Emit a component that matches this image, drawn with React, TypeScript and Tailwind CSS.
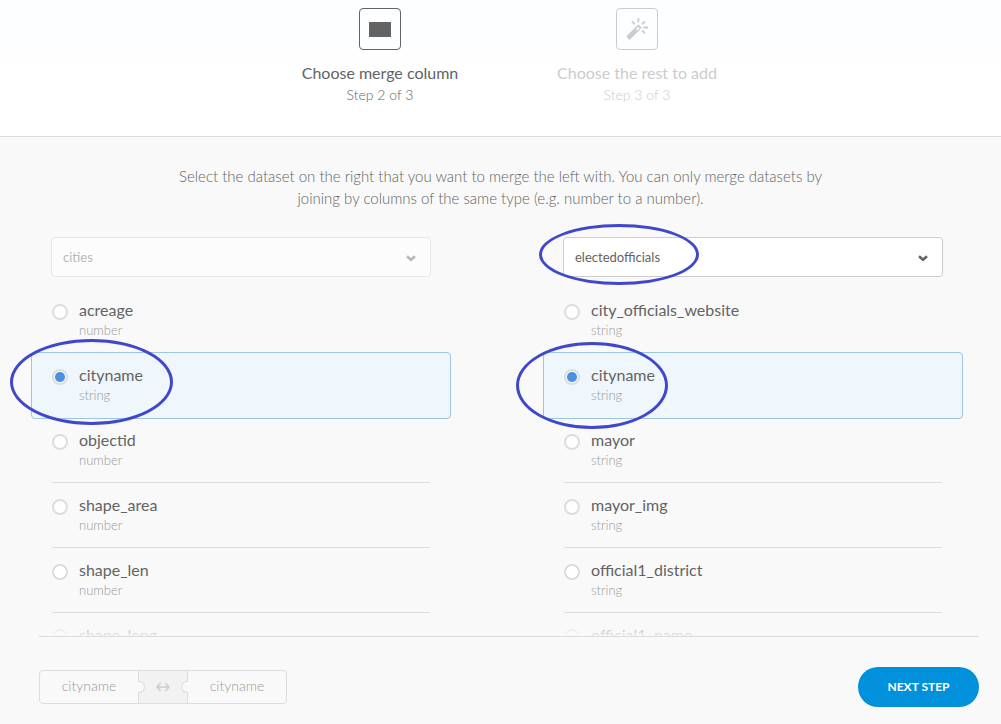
import { useState } from "react";
import type { ReactNode } from "react";

type Column = { name: string; type: string };

const leftColumns: Column[] = [
  { name: "acreage", type: "number" },
  { name: "cityname", type: "string" },
  { name: "objectid", type: "number" },
  { name: "shape_area", type: "number" },
  { name: "shape_len", type: "number" },
  { name: "shape_leng", type: "number" },
];

const rightColumns: Column[] = [
  { name: "city_officials_website", type: "string" },
  { name: "cityname", type: "string" },
  { name: "mayor", type: "string" },
  { name: "mayor_img", type: "string" },
  { name: "official1_district", type: "string" },
  { name: "official1_name", type: "string" },
];

function WandIcon() {
  return (
    <svg viewBox="0 0 22 22" className="size-[22px]" fill="none" stroke="currentColor" aria-hidden="true">
      <path d="M12.4 0v4.6M5.9 3.3l3 3M19 3.3l-3 3M17.3 9.5H22M16 12.4l3 3" strokeWidth="1.8" />
      <path
        d="M0.3 18.6L11.6 7.1a1.2 1.2 0 0 1 1.7 0l1.7 1.7a1.2 1.2 0 0 1 0 1.7L3.6 21.9zM9.9 11l1.5 1.5 2.2-2.3-1.4-1.5z"
        fill="currentColor"
        fillRule="evenodd"
        stroke="none"
      />
    </svg>
  );
}

function Chevron() {
  return (
    <svg
      viewBox="0 0 10 7"
      className="pointer-events-none absolute right-[15px] top-[18px] h-[7px] w-[10px]"
      fill="none"
      stroke="currentColor"
      strokeWidth="2.5"
      aria-hidden="true"
    >
      <path d="M1 1.2l4 3.6 4-3.6" />
    </svg>
  );
}

function Step({ title, note, active, children }: { title: string; note: string; active?: boolean; children: ReactNode }) {
  return (
    <li className={active ? "flex w-[257px] flex-col items-center text-[#636363]" : "flex w-[257px] flex-col items-center text-[#cccccc]"}>
      <span className="flex size-[42px] items-center justify-center rounded-[4px] border border-current">{children}</span>
      <span className="mt-3 text-base leading-[22px]">{title}</span>
      <span className="text-sm font-light leading-[22px]">{note}</span>
    </li>
  );
}

function DatasetSelect({ label, value, disabled, marked }: { label: string; value: string; disabled?: boolean; marked?: boolean }) {
  return (
    <div className={disabled ? "relative text-[#b8b8b8]" : "relative text-[#636363]"}>
      <select
        aria-label={label}
        disabled={disabled}
        className="block h-10 w-full appearance-none rounded-[4px] border border-[#cccccc] bg-white px-[11px] pt-[2px] text-[13px] disabled:border-[#e6e6e6] disabled:bg-[#fcfcfc] disabled:opacity-100"
      >
        <option>{value}</option>
      </select>
      <Chevron />
      {marked && (
        <span className="pointer-events-none absolute -left-6 -top-[13px] h-[61px] w-[160px] rounded-[50%] border-3 border-[#3f48cc]" />
      )}
    </div>
  );
}

function ColumnList({
  group,
  columns,
  selected,
  onSelect,
  markClass,
}: {
  group: string;
  columns: Column[];
  selected: string;
  onSelect: (name: string) => void;
  markClass: string;
}) {
  return (
    <ul className="px-px">
      {columns.map((c) => {
        const on = c.name === selected;
        return (
          <li
            key={c.name}
            className={
              on
                ? "relative z-10 -mx-[21px] -my-px h-[67px] rounded-[4px] border border-[#9cc5e3] bg-[#eff6fc] px-5 pt-[11px]"
                : "h-[65px] border-b border-[#dddddd] pt-[11px]"
            }
          >
            <label className="flex gap-[11px]">
              <input
                type="radio"
                name={group}
                checked={on}
                onChange={() => onSelect(c.name)}
                className="mt-[5px] size-4 shrink-0 appearance-none rounded-full border-2 border-[#dddddd] bg-white checked:bg-[radial-gradient(circle,#4a90e2_4.5px,#ffffff_5.5px)]"
              />
              <span className="flex flex-col text-[#636363]">
                <span className="text-base leading-[22px]">{c.name}</span>
                <span className="text-[13px] font-light leading-[18px] text-[#999999]">{c.type}</span>
              </span>
            </label>
            {on && <span className={markClass} />}
          </li>
        );
      })}
    </ul>
  );
}

export default function App() {
  const [left, setLeft] = useState("cityname");
  const [right, setRight] = useState("cityname");

  return (
    <div className="min-h-screen bg-[#f9f9f9] font-['Lato',sans-serif]">
      <header className="border-b border-[#dddddd] bg-white bg-linear-to-b from-[#fcfeff] to-white to-60% pb-[30px] pt-2">
        <ol className="flex justify-center pl-4">
          <Step title="Choose merge column" note="Step 2 of 3" active>
            <span className="h-[15px] w-[22px] bg-current" />
          </Step>
          <Step title="Choose the rest to add" note="Step 3 of 3">
            <WandIcon />
          </Step>
        </ol>
      </header>

      <main className="pt-7">
        <p className="mx-auto max-w-[660px] text-center text-[15px] font-light leading-[22px] text-[#636363]">
          Select the dataset on the right that you want to merge the left with. You can only merge datasets by joining by columns of
          the same type (e.g. number to a number).
        </p>

        <div className="mt-7 grid grid-cols-2 gap-x-33 pl-[51px] pr-[58px]">
          <DatasetSelect label="Left dataset" value="cities" disabled />
          <DatasetSelect label="Right dataset" value="electedofficials" marked />
        </div>

        <div className="relative h-[359px] overflow-hidden pt-[11px]">
          <div className="grid grid-cols-2 gap-x-33 pl-[51px] pr-[58px]">
            <ColumnList
              group="left-column"
              columns={leftColumns}
              selected={left}
              onSelect={setLeft}
              markClass="pointer-events-none absolute -left-[22px] -top-[14px] h-[86px] w-[163px] rounded-[50%] border-3 border-[#3f48cc]"
            />
            <ColumnList
              group="right-column"
              columns={rightColumns}
              selected={right}
              onSelect={setRight}
              markClass="pointer-events-none absolute -left-7 -top-[11px] h-[87px] w-[152px] rounded-[50%] border-3 border-[#3f48cc]"
            />
          </div>
          <div className="pointer-events-none absolute inset-x-0 bottom-0 h-5 bg-linear-to-b from-[#f9f9f9]/20 to-[#f9f9f9]/90" />
        </div>
      </main>

      <footer className="ml-[39px] mr-[22px] flex items-center justify-between border-t border-[#dddddd] pb-[17px] pt-[30px]">
        <div className="flex h-[34px] items-stretch rounded-[4px] border border-[#dddddd] text-sm font-light leading-[30px] text-[#999999]">
          <span className="w-[98px] text-center">{left}</span>
          <span className="relative flex w-[50px] items-center justify-center border-x border-[#dddddd] bg-[#f2f2f2] text-[#cccccc]">
            <span className="absolute -left-px top-[10px] h-3 w-[7px] rounded-r-full border border-l-0 border-[#dddddd] bg-[#f9f9f9]" />
            <svg viewBox="0 0 14 10" className="h-[10px] w-[14px]" fill="none" stroke="currentColor" strokeWidth="1.4" aria-hidden="true">
              <path d="M1 5h12M4.6 1L0.9 5l3.7 4M9.4 1l3.7 4-3.7 4" />
            </svg>
            <span className="absolute -right-px top-[10px] h-3 w-[7px] rounded-l-full border border-r-0 border-[#dddddd] bg-[#f9f9f9]" />
          </span>
          <span className="w-[98px] text-center">{right}</span>
        </div>
        <button type="button" className="h-10 w-[121px] rounded-full bg-[#0090dc] text-xs font-bold text-white">
          NEXT STEP
        </button>
      </footer>
    </div>
  );
}
